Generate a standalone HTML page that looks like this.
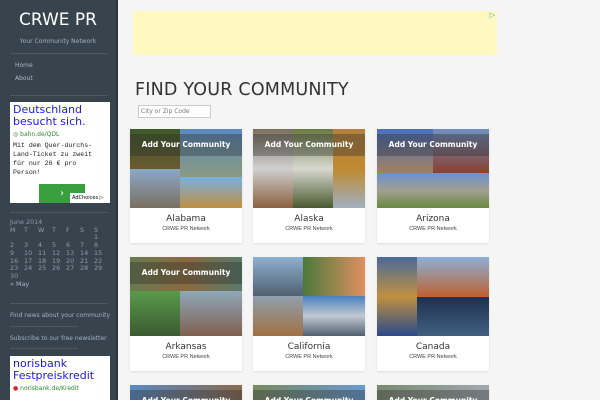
<!DOCTYPE html>
<html style="width:600px;height:400px;overflow:hidden"><head><meta charset="utf-8"><style>
*{margin:0;padding:0;box-sizing:border-box}
body{width:600px;height:400px;overflow:hidden;background:#f5f5f5;font-family:"DejaVu Sans","Liberation Sans",sans-serif;position:relative}
.sb{position:absolute;left:0;top:0;width:118px;height:400px;background:#37444e;border-right:2px solid #2a353e}
.sb .t{position:absolute;left:0;width:116px;text-align:center;top:10px;color:#fff;font-size:17px}
.sb .s{position:absolute;left:0;width:116px;text-align:center;top:38px;color:#9fb0bd;font-size:6px}
.hr{position:absolute;left:10px;width:98px;height:1px;background:#4a5862}
.sm{position:absolute;color:#a9b8c4;font-size:6px}
.ad{position:absolute;left:10px;width:100px;background:#fff}
.cal{position:absolute;left:10px;top:219px;color:#8e9ca8;font-size:6.4px;line-height:7.7px}
.cal span{display:inline-block;width:14px}
.ban{position:absolute;left:133px;top:11px;width:364px;height:44px;background:#fff8c1}
h1{position:absolute;left:135px;top:80px;font-weight:normal;font-size:17.5px;color:#333;letter-spacing:.2px}
.inp{position:absolute;left:138px;top:105px;width:73px;height:13px;border:1px solid #ccc;background:#fff;font-size:6px;color:#777;padding:2px 2px}
.card{position:absolute;width:112px;height:114px;background:#fff;box-shadow:0 1px 2px rgba(0,0,0,.1)}
.img{position:relative;width:112px;height:79px;overflow:hidden}
.img div{position:absolute}
.band{left:0;right:0;top:5px;height:22px;background:rgba(40,40,40,.35);color:#fff;font-size:7.5px;font-weight:bold;text-align:center;line-height:22px}
.nm{text-align:center;font-size:9px;color:#333;margin-top:6px}
.nw{text-align:center;font-size:5.5px;color:#444;margin-top:2px;font-family:"Liberation Sans",sans-serif}
</style></head><body>
<div class="sb">
<div class="t">CRWE PR</div>
<div class="s">Your Community Network</div>
<div class="hr" style="top:53px"></div>
<div class="sm" style="left:15px;top:62px">Home</div>
<div class="sm" style="left:15px;top:75px">About</div>
<div class="hr" style="top:95px"></div>
<div class="ad" style="top:102px;height:101px">
<div style="color:#1a1adc;font-size:11px;line-height:12px;padding:2px 3px">Deutschland besucht sich.</div>
<div style="color:#2a8a2a;font-size:6px;padding:1px 3px">◎ bahn.de/QDL</div>
<div style="font-family:'Liberation Mono',monospace;font-size:6.6px;line-height:9px;color:#222;padding:2px 3px">Mit dem Quer-durchs-Land-Ticket zu zweit für nur 26 € pro Person!</div>
<div style="position:absolute;left:29px;top:82px;width:46px;height:19px;background:#3a9f3e;color:#fff;text-align:center;font-size:10px;line-height:19px">›</div>
<div style="position:absolute;left:60px;top:91px;width:40px;height:10px;background:#fff;font-size:5px;color:#000;padding:2px">AdChoices ▷</div>
</div>
<div class="hr" style="top:212px"></div>
<div class="cal">June 2014<br><span>M</span><span>T</span><span>W</span><span>T</span><span>F</span><span>S</span><span>S</span><br><span></span><span></span><span></span><span></span><span></span><span></span><span>1</span><br><span>2</span><span>3</span><span>4</span><span>5</span><span>6</span><span>7</span><span>8</span><br><span>9</span><span>10</span><span>11</span><span>12</span><span>13</span><span>14</span><span>15</span><br><span>16</span><span>17</span><span>18</span><span>19</span><span>20</span><span>21</span><span>22</span><br><span>23</span><span>24</span><span>25</span><span>26</span><span>27</span><span>28</span><span>29</span><br>30<br><span style="color:#a9b8c4;width:40px">« May</span></div>
<div class="hr" style="top:303px"></div>
<div class="sm" style="left:10px;top:312px;color:#9fb0bd">Find news about your community</div>
<div class="hr" style="top:326px;width:68px"></div>
<div class="sm" style="left:10px;top:335px;color:#9fb0bd">Subscribe to our free newsletter</div>
<div class="hr" style="top:348px;width:68px"></div>
<div class="ad" style="top:356px;height:44px">
<div style="color:#1a1adc;font-size:11px;line-height:12px;padding:2px 3px">norisbank Festpreiskredit</div>
<div style="color:#2a8a2a;font-size:6px;padding:1px 3px"><span style="color:#d22">●</span> norisbank.de/Kredit</div>
</div>
</div>
<div class="ban"><div style="position:absolute;right:2px;top:0;color:#3ab;font-size:7px">▷</div></div>
<h1>FIND YOUR COMMUNITY</h1>
<div class="inp">City or Zip Code</div>

<div class="card" style="left:130px;top:129px"><div class="img">
<div style="left:0;top:0;width:50px;height:40px;background:linear-gradient(#3d5a2a,#6b5a30)"></div>
<div style="left:50px;top:0;width:62px;height:48px;background:linear-gradient(#5a8ac0,#8a9a80)"></div>
<div style="left:0;top:40px;width:50px;height:39px;background:linear-gradient(#8aa8c8,#7a7060)"></div>
<div style="left:50px;top:48px;width:62px;height:31px;background:linear-gradient(#7ab0e0,#c09040)"></div>
<div class="band">Add Your Community</div></div><div class="nm">Alabama</div><div class="nw">CRWE PR Network</div></div>

<div class="card" style="left:253px;top:129px"><div class="img">
<div style="left:0;top:0;width:40px;height:79px;background:linear-gradient(#7a7060,#d0d0d0,#8a6040)"></div>
<div style="left:40px;top:0;width:40px;height:79px;background:linear-gradient(#6a7a40,#d8d8d0,#4a5a30)"></div>
<div style="left:80px;top:0;width:32px;height:79px;background:linear-gradient(#b08040,#c08a30,#a0b0c0)"></div>
<div class="band">Add Your Community</div></div><div class="nm">Alaska</div><div class="nw">CRWE PR Network</div></div>

<div class="card" style="left:377px;top:129px"><div class="img">
<div style="left:0;top:0;width:56px;height:44px;background:linear-gradient(#4a70c0,#a08060)"></div>
<div style="left:56px;top:0;width:56px;height:44px;background:linear-gradient(#7090c0,#8a4030)"></div>
<div style="left:0;top:44px;width:112px;height:35px;background:linear-gradient(#6a90d0,#a0a090,#6a8a40)"></div>
<div class="band">Add Your Community</div></div><div class="nm">Arizona</div><div class="nw">CRWE PR Network</div></div>

<div class="card" style="left:130px;top:257px"><div class="img">
<div style="left:0;top:0;width:112px;height:34px;background:linear-gradient(90deg,#6a7a50,#8a6a40,#5a7a6a)"></div>
<div style="left:0;top:34px;width:50px;height:45px;background:linear-gradient(#5a9a4a,#3a5a30)"></div>
<div style="left:50px;top:34px;width:62px;height:45px;background:linear-gradient(#90a8b8,#806050)"></div>
<div class="band">Add Your Community</div></div><div class="nm">Arkansas</div><div class="nw">CRWE PR Network</div></div>

<div class="card" style="left:253px;top:257px"><div class="img">
<div style="left:0;top:0;width:50px;height:39px;background:linear-gradient(#90b0d0,#506070)"></div>
<div style="left:50px;top:0;width:62px;height:39px;background:linear-gradient(90deg,#4a7a3a,#e09060)"></div>
<div style="left:0;top:39px;width:50px;height:40px;background:linear-gradient(#90a0b0,#a07040)"></div>
<div style="left:50px;top:39px;width:62px;height:40px;background:linear-gradient(#4a80c0,#c0c8d0,#506070)"></div>
</div><div class="nm">California</div><div class="nw">CRWE PR Network</div></div>

<div class="card" style="left:377px;top:257px"><div class="img">
<div style="left:0;top:0;width:40px;height:79px;background:linear-gradient(#4a6a9a,#c09040,#2a4a8a)"></div>
<div style="left:40px;top:0;width:72px;height:40px;background:linear-gradient(#8ab0d8,#c06030)"></div>
<div style="left:40px;top:40px;width:72px;height:39px;background:linear-gradient(#203050,#406080)"></div>
</div><div class="nm">Canada</div><div class="nw">CRWE PR Network</div></div>

<div class="card" style="left:130px;top:385px;height:15px"><div class="img" style="height:15px"><div style="left:0;top:0;width:112px;height:79px;background:linear-gradient(90deg,#5a8ac0,#8a6a50)"></div><div class="band">Add Your Community</div></div></div>
<div class="card" style="left:253px;top:385px;height:15px"><div class="img" style="height:15px"><div style="left:0;top:0;width:112px;height:79px;background:linear-gradient(90deg,#7a8a60,#6a9ad0)"></div><div class="band">Add Your Community</div></div></div>
<div class="card" style="left:377px;top:385px;height:15px"><div class="img" style="height:15px"><div style="left:0;top:0;width:112px;height:79px;background:linear-gradient(90deg,#7a8a70,#a0a8b0)"></div><div class="band">Add Your Community</div></div></div>
</body></html>
